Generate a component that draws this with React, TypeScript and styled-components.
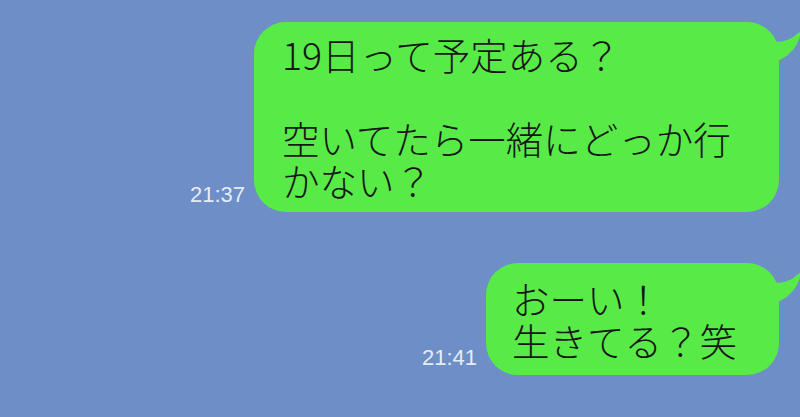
import React from "react";
import styled, { createGlobalStyle } from "styled-components";

const GlobalStyle = createGlobalStyle`
  html, body {
    margin: 0;
    padding: 0;
    background: #6d8ec6;
  }
  body {
    font-family: "Noto Sans CJK JP", "Noto Sans", sans-serif;
  }
`;

const Screen = styled.div`
  width: 800px;
  height: 417px;
  overflow: hidden;
  background: #6d8ec6;
  display: flex;
  flex-direction: column;
  gap: 51px;
  padding: 22px 21px 0 0;
  box-sizing: border-box;
`;

const Row = styled.div`
  display: flex;
  justify-content: flex-end;
  align-items: flex-end;
  gap: 9px;
`;

const Time = styled.span`
  font-family: "Liberation Sans", Arial, sans-serif;
  font-size: 22px;
  line-height: 1;
  color: #e6ecf6;
  margin-bottom: 6px;
`;

const Bubble = styled.div<{ $width?: number; $padRight: number; $padY: number; $padLeft: number }>`
  position: relative;
  background: #58eb47;
  border-radius: 32px;
  width: ${(p) => (p.$width ? `${p.$width}px` : "auto")};
  box-sizing: border-box;
  padding: ${(p) => p.$padY}px ${(p) => p.$padRight}px ${(p) => p.$padY}px
    ${(p) => p.$padLeft}px;
  font-size: 37.5px;
  line-height: 42px;
  color: #161616;
  font-weight: 300;
`;

const Line = styled.p`
  margin: 0;
  height: 42px;
  white-space: nowrap;
`;

const TailSvg = styled.svg`
  position: absolute;
  top: 0;
  right: -22px;
  width: 36px;
  height: 46px;
  overflow: visible;
`;

function Tail() {
  return (
    <TailSvg viewBox="0 0 36 46">
      <path
        d="M0 36 L0 18 L8 19 Q22 22 33 11 Q36 9 35.5 13 Q31 30 15 38 L0 40 Z"
        fill="#58eb47"
      />
    </TailSvg>
  );
}

type MessageProps = {
  time: string;
  lines: string[];
  width?: number;
  padRight: number;
  padLeft: number;
  padY: number;
};

function Message({ time, lines, width, padRight, padLeft, padY }: MessageProps) {
  return (
    <Row>
      <Time>{time}</Time>
      <Bubble $width={width} $padRight={padRight} $padLeft={padLeft} $padY={padY}>
        {lines.map((l, i) => (
          <Line key={i}>{l}</Line>
        ))}
        <Tail />
      </Bubble>
    </Row>
  );
}

export default function App() {
  return (
    <>
      <GlobalStyle />
      <Screen>
        <Message
          time="21:37"
          width={525}
          padLeft={28}
          padRight={30}
          padY={11}
          lines={["19日って予定ある？", "", "空いてたら一緒にどっか行", "かない？"]}
        />
        <Message
          time="21:41"
          padLeft={26}
          padRight={42}
          padY={14}
          lines={["おーい！", "生きてる？笑"]}
        />
      </Screen>
    </>
  );
}
